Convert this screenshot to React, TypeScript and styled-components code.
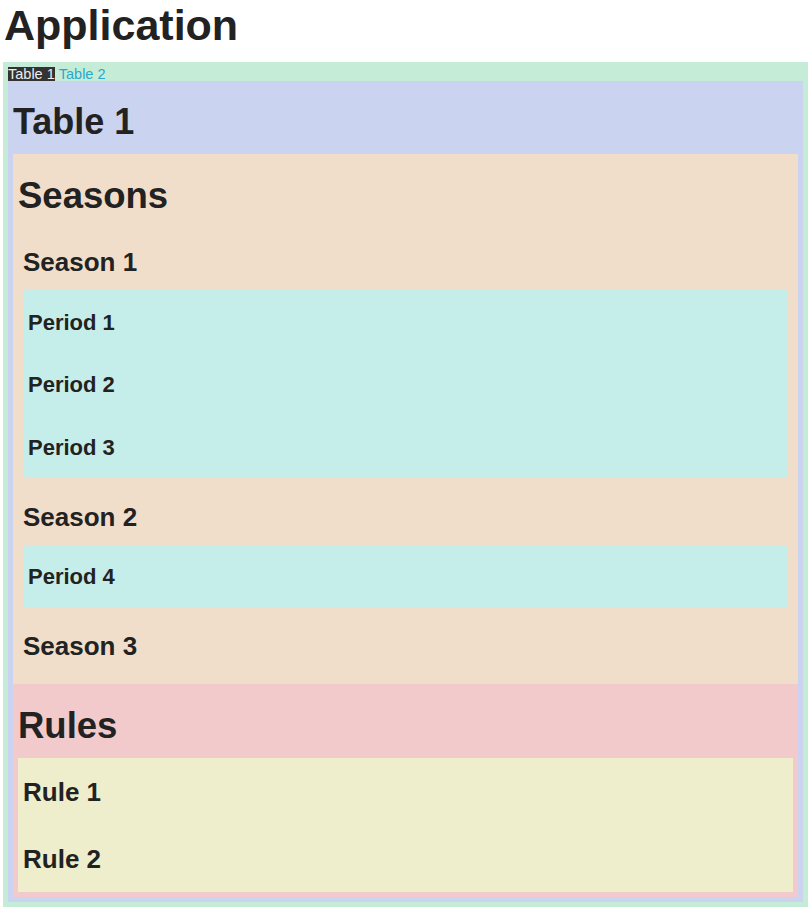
import React from "react";
import styled, { createGlobalStyle } from "styled-components";

const GlobalStyle = createGlobalStyle`
  html, body { margin: 0; padding: 0; background: #ffffff; }
  body { font-family: "Liberation Sans", Arial, Helvetica, sans-serif; color: #222222; }
`;

const Page = styled.div`
  padding: 0 2px 0 3px;
`;

const AppTitle = styled.h1`
  margin: 0 0 12px;
  padding-left: 1px;
  font-size: 43px;
  line-height: 50px;
  font-weight: 700;
`;

const TableFrame = styled.div`
  background: #c5ecd7;
  padding: 5px;
`;

const TabBar = styled.div`
  display: flex;
  gap: 4px;
  font-size: 14.5px;
  line-height: 14px;
`;

const Tab = styled.span<{ $active?: boolean }>`
  background: ${(p) => (p.$active ? "#333333" : "transparent")};
  color: ${(p) => (p.$active ? "#eeeeee" : "#2aa8cc")};
  cursor: pointer;
`;

const TablePanel = styled.div`
  background: #cad3ef;
  padding: 5px;
`;

const TableTitle = styled.h2`
  margin: 14px 0 11px;
  font-size: 36px;
  line-height: 43px;
  font-weight: 700;
`;

const Section = styled.div<{ $bg: string }>`
  background: ${(p) => p.$bg};
  padding: 5px;
`;

const SectionTitle = styled.h3`
  margin: 15px 0 11px;
  font-size: 36.5px;
  line-height: 43px;
  font-weight: 700;
`;

const SeasonItem = styled.div`
  padding: 5px;
`;

const ItemTitle = styled.h4`
  margin: 14px 0 12px;
  font-size: 26px;
  line-height: 31px;
  font-weight: 700;
`;

const PeriodList = styled.div`
  background: #c5eeeb;
`;

const PeriodItem = styled.div`
  padding: 5px;
`;

const PeriodTitle = styled.h5`
  margin: 14.5px 0 12px;
  font-size: 22px;
  line-height: 26px;
  font-weight: 700;
`;

const RuleList = styled.div`
  background: #eeeecc;
`;

const RuleItem = styled.div`
  padding: 5px;
`;

type Season = { name: string; periods: string[] };

const seasons: Season[] = [
  { name: "Season 1", periods: ["Period 1", "Period 2", "Period 3"] },
  { name: "Season 2", periods: ["Period 4"] },
  { name: "Season 3", periods: [] },
];

const rules = ["Rule 1", "Rule 2"];

export default function App() {
  return (
    <Page>
      <GlobalStyle />
      <AppTitle>Application</AppTitle>
      <TableFrame>
        <TabBar>
          <Tab $active>Table 1</Tab>
          <Tab>Table 2</Tab>
        </TabBar>
        <TablePanel>
          <TableTitle>Table 1</TableTitle>
          <Section $bg="#f0decb">
            <SectionTitle>Seasons</SectionTitle>
            {seasons.map((s) => (
              <SeasonItem key={s.name}>
                <ItemTitle>{s.name}</ItemTitle>
                {s.periods.length > 0 && (
                  <PeriodList>
                    {s.periods.map((p) => (
                      <PeriodItem key={p}>
                        <PeriodTitle>{p}</PeriodTitle>
                      </PeriodItem>
                    ))}
                  </PeriodList>
                )}
              </SeasonItem>
            ))}
          </Section>
          <Section $bg="#f2cacb">
            <SectionTitle>Rules</SectionTitle>
            <RuleList>
              {rules.map((r) => (
                <RuleItem key={r}>
                  <ItemTitle>{r}</ItemTitle>
                </RuleItem>
              ))}
            </RuleList>
          </Section>
        </TablePanel>
      </TableFrame>
    </Page>
  );
}
